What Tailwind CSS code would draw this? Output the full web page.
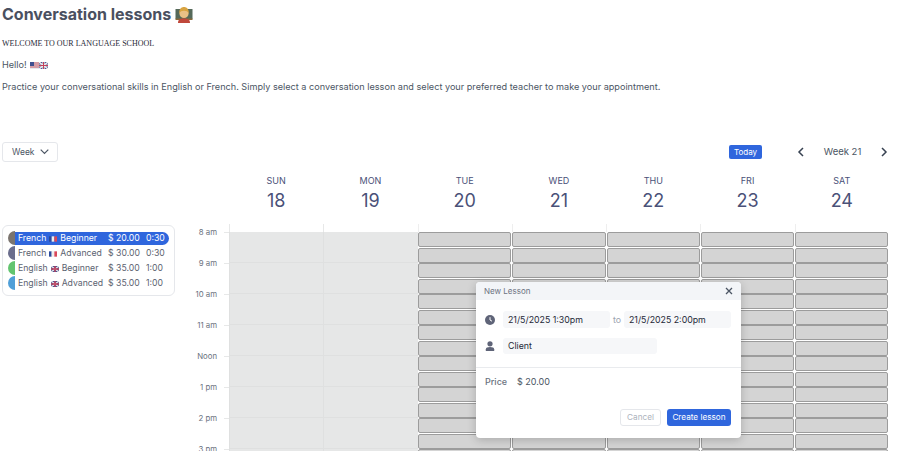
<!DOCTYPE html>
<html lang="en">
<head>
  <meta charset="UTF-8">
  <meta name="viewport" content="width=device-width,initial-scale=1">
  <title>Conversation lessons</title>
  <script src="https://cdn.jsdelivr.net/npm/@tailwindcss/browser@4"></script>
</head>
<body class="bg-white h-[451px] w-[900px] overflow-hidden relative font-['Inter','Liberation_Sans',sans-serif] text-[#4b5563]">
  <div class="px-[2px]">
    <h1 class="h-[28px] flex items-center gap-[4px] text-[16px] leading-[20px] font-bold text-[#4a5060]">
      Conversation lessons
      <svg width="18" height="17" viewBox="0 0 18 17"><rect x="0.500" y="3" width="17" height="10" fill="#55695a"/><rect x="0.500" y="12.500" width="17" height="1.500" fill="#8a6a3a"/><path d="M3 17c0-3.500 2.200-4.500 6-4.500s6 1 6 4.500z" fill="#c0483b"/><circle cx="9" cy="7.500" r="4.600" fill="#eac086"/><path d="M4.200 7.500C4 3 6.300 1 9 1s5 2 4.800 6.500C12.800 5.500 11.200 4.800 9 4.800S5.200 5.500 4.200 7.500z" fill="#d9a441"/></svg>
    </h1>
    <p class="mt-[10px] font-['Liberation_Serif',serif] text-[8px] leading-[12px] text-[#1f2937]">WELCOME TO OUR LANGUAGE SCHOOL</p>
    <p class="mt-[9px] flex items-center gap-[3px] text-[9.150px] leading-[12px]">
      Hello!
      <span class="flex">
        <svg width="9" height="7" viewBox="0 0 9 7"><rect width="9" height="7" fill="#e8e8ee"/><path d="M0 1h9M0 3h9M0 5h9" stroke="#c2515c" stroke-width="1"/><rect width="4" height="4" fill="#3f4f8f"/></svg>
        <svg width="9" height="7" viewBox="0 0 9 7"><rect width="9" height="7" fill="#3f4f8f"/><path d="M0 0l9 7M9 0L0 7" stroke="#eee" stroke-width="1.400"/><path d="M4.500 0v7M0 3.500h9" stroke="#eee" stroke-width="2.200"/><path d="M4.500 0v7M0 3.500h9" stroke="#c2415c" stroke-width="1"/></svg>
      </span>
    </p>
    <p class="mt-[10px] text-[9.150px] leading-[12px]">Practice your conversational skills in English or French. Simply select a conversation lesson and select your preferred teacher to make your appointment.</p>
  </div>

  <div class="mt-[49px] h-[20px] flex items-center relative">
    <button class="ml-[2px] w-[56px] h-[20px] flex items-center justify-between pl-[9px] pr-[8px] border border-[#e5e7eb] rounded-[3px] text-[8.500px] text-[#4b5563]">
      Week
      <svg width="9" height="6" viewBox="0 0 9 6" fill="none" stroke="#4b5563" stroke-width="1.200"><path d="M.7.700l3.800 3.800L8.300.7"/></svg>
    </button>
    <button class="ml-auto w-[33px] h-[14px] rounded-[2px] bg-[#2f66dd] text-white text-[8px] leading-[14px]">Today</button>
    <svg class="ml-[35px]" width="8" height="10" viewBox="0 0 8 10" fill="none" stroke="#374151" stroke-width="1.500"><path d="M6 1L2 5l4 4"/></svg>
    <span class="w-[75px] text-center text-[9.500px] text-[#4b5563]">Week 21</span>
    <svg class="mr-[12px]" width="8" height="10" viewBox="0 0 8 10" fill="none" stroke="#374151" stroke-width="1.500"><path d="M2 1l4 4-4 4"/></svg>
  </div>

  <div class="flex">
    <aside class="w-[229px] shrink-0 flex">
      <div class="w-[176px] shrink-0">
        <div class="mt-[63px] ml-[2px] h-[71px] w-[173px] border border-[#e5e7eb] rounded-[6px] px-[5px] pt-[5px] text-[8.700px] leading-[15px] text-[#5b6270]">
          <div class="flex h-[15px]">
            <span class="w-[7px] h-[14px] rounded-l-full bg-[#7a746e]"></span>
            <div class="flex-1 h-[13px] mt-[1px] flex bg-[#2f66dd] text-white rounded-r-full leading-[13px] pl-[3px]">
              <span class="flex items-center gap-[3px] w-[90px]">French
                <svg width="8" height="6" viewBox="0 0 3 2"><rect width="1" height="2" fill="#2b4a9b"/><rect x="1" width="1" height="2" fill="#eee"/><rect x="2" width="1" height="2" fill="#d9485a"/></svg>
                Beginner</span>
              <span class="w-[38px]">$ 20.00</span><span>0:30</span>
            </div>
          </div>
          <div class="flex h-[15px]">
            <span class="w-[7px] h-[14px] rounded-l-full bg-[#6a6d8c]"></span>
            <div class="flex-1 flex pl-[3px]">
              <span class="flex items-center gap-[3px] w-[90px]">French
                <svg width="8" height="6" viewBox="0 0 3 2"><rect width="1" height="2" fill="#2b4a9b"/><rect x="1" width="1" height="2" fill="#eee"/><rect x="2" width="1" height="2" fill="#d9485a"/></svg>
                Advanced</span>
              <span class="w-[38px]">$ 30.00</span><span>0:30</span>
            </div>
          </div>
          <div class="flex h-[15px]">
            <span class="w-[7px] h-[14px] rounded-l-full bg-[#62c46f]"></span>
            <div class="flex-1 flex pl-[3px]">
              <span class="flex items-center gap-[3px] w-[90px]">English
                <svg width="8" height="6" viewBox="0 0 9 7"><rect width="9" height="7" fill="#3f4f8f"/><path d="M0 0l9 7M9 0L0 7" stroke="#eee" stroke-width="1.400"/><path d="M4.500 0v7M0 3.500h9" stroke="#c2415c" stroke-width="1.600"/></svg>
                Beginner</span>
              <span class="w-[38px]">$ 35.00</span><span>1:00</span>
            </div>
          </div>
          <div class="flex h-[15px]">
            <span class="w-[7px] h-[14px] rounded-l-full bg-[#4f9fd8]"></span>
            <div class="flex-1 flex pl-[3px]">
              <span class="flex items-center gap-[3px] w-[90px]">English
                <svg width="8" height="6" viewBox="0 0 9 7"><rect width="9" height="7" fill="#3f4f8f"/><path d="M0 0l9 7M9 0L0 7" stroke="#eee" stroke-width="1.400"/><path d="M4.500 0v7M0 3.500h9" stroke="#c2415c" stroke-width="1.600"/></svg>
                Advanced</span>
              <span class="w-[38px]">$ 35.00</span><span>1:00</span>
            </div>
          </div>
        </div>
      </div>
      <div id="hours" class="flex-1 pt-[70px] text-[7.800px] text-[#6b7280]"></div>
    </aside>

    <div class="w-[660px] shrink-0">
      <div id="heads" class="grid grid-cols-7 h-[62px] pt-[13px] text-[#4a5178]"></div>
      <div id="cols" class="grid grid-cols-7 h-[230px] overflow-hidden"></div>
    </div>
  </div>

  <div class="absolute left-[476px] top-[282px] w-[265px] h-[156px] bg-white rounded-[4px] shadow-[0_2px_10px_rgba(0,0,0,0.2)] overflow-hidden text-[8.800px]">
    <div class="h-[18px] bg-[#f3f5f8] flex items-center justify-between pl-[8px] pr-[8px] text-[8px] text-[#6b7280]">
      New Lesson
      <svg width="8" height="8" viewBox="0 0 8 8" stroke="#4b5563" stroke-width="1.300"><path d="M1 1l6 6M7 1L1 7"/></svg>
    </div>
    <div class="h-[68px] border-b border-[#e9ebee] pt-[11px]">
      <div class="flex items-center h-[17px]">
        <svg class="ml-[9px] mr-[8px]" width="10" height="10" viewBox="0 0 10 10"><circle cx="5" cy="5" r="5" fill="#5f6478"/><path d="M5 2.200V5l2 1.200" fill="none" stroke="#fff" stroke-width="1"/></svg>
        <span class="w-[107px] h-[17px] bg-[#f6f7f9] rounded-[3px] pl-[5px] leading-[17px] text-[#1f2937]">21/5/2025 1:30pm</span>
        <span class="w-[11px] ml-[3px] text-[#9ca3af]">to</span>
        <span class="w-[107px] h-[17px] bg-[#f6f7f9] rounded-[3px] pl-[5px] leading-[17px] text-[#1f2937]">21/5/2025 2:00pm</span>
      </div>
      <div class="flex items-center h-[16px] mt-[10px]">
        <svg class="ml-[9px] mr-[8px]" width="10" height="10" viewBox="0 0 10 10" fill="#5f6478"><circle cx="5" cy="2.800" r="2.600"/><path d="M.8 10V8.200C.8 6.700 2.500 6 5 6s4.200.7 4.200 2.200V10z"/></svg>
        <span class="w-[154px] h-[16px] bg-[#f6f7f9] rounded-[3px] pl-[5px] leading-[16px] text-[#1f2937]">Client</span>
      </div>
    </div>
    <div class="flex items-center h-[27px] pl-[9px]">
      <span class="w-[32px] font-medium text-[#6b7280] text-[9px]">Price</span>
      <span class="text-[9px] text-[#4b5563]">$ 20.00</span>
    </div>
    <div class="flex justify-end gap-[6px] pr-[10px] mt-[14px]">
      <button class="w-[41px] h-[17px] border border-[#e5e7eb] rounded-[3px] text-[8.200px] text-[#adb3bd]">Cancel</button>
      <button class="w-[64px] h-[17px] bg-[#2f66dd] rounded-[3px] text-[8.200px] text-white">Create lesson</button>
    </div>
  </div>

  <script>
    var days = [['SUN',18],['MON',19],['TUE',20],['WED',21],['THU',22],['FRI',23],['SAT',24]];
    var hours = ['8 am','9 am','10 am','11 am','Noon','1 pm','2 pm','3 pm'];

    document.getElementById('heads').innerHTML = days.map(function(d){
      return '<div class="text-center"><div class="text-[9px] leading-[12px]">'+d[0]+'</div><div class="text-[18px] leading-[24px] mt-[2px]">'+d[1]+'</div></div>';
    }).join('');

    document.getElementById('hours').innerHTML = hours.map(function(h){
      return '<div class="h-[31px] flex items-start justify-end"><span class="leading-[10px] mt-[-5px] mr-[7px]">'+h+'</span><span class="w-[5px] border-t border-[#e7e8e8]"></span></div>';
    }).join('');

    // sun/mon closed, rest bookable in half hour slots
    var colsHtml = '';
    days.forEach(function(d,i){
      var inner = '';
      if(i<2){
        inner += '<div class="h-[8px] border-l border-[#e7e8e8]"></div>';
        for(var k=0;k<8;k++){
          inner += '<div class="h-[31px] bg-[#e6e7e7] border-l border-b border-[#dfe0e0]"></div>';
        }
      } else {
        inner += '<div class="h-[8px] border-l border-[#eeeeee]"></div>';
        for(var s=0;s<15;s++){
          inner += '<div class="h-[15.500px] pb-[0.500px] pl-[0.500px] pr-[0.500px]"><div class="h-full bg-[#d4d4d4] border border-[#9c9c9c] rounded-[2px]"></div></div>';
        }
      }
      colsHtml += '<div>'+inner+'</div>';
    });
    document.getElementById('cols').innerHTML = colsHtml;
  </script>
</body>
</html>
